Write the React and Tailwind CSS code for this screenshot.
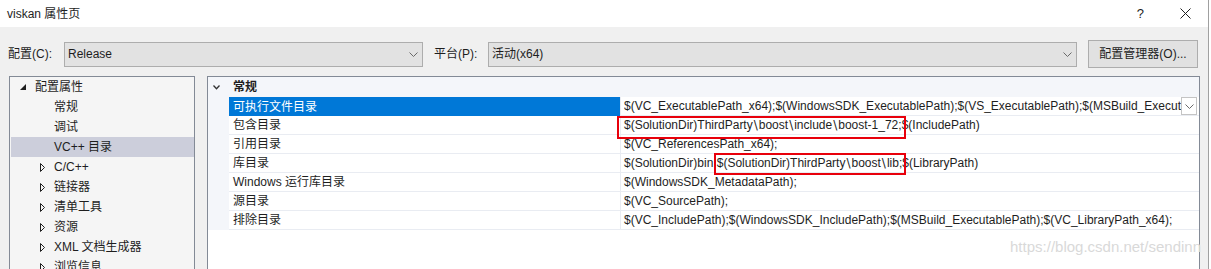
import React from 'react';

const tree = [
  { label: '配置属性', level: 0, icon: 'open' },
  { label: '常规', level: 1 },
  { label: '调试', level: 1 },
  { label: 'VC++ 目录', level: 1, selected: true },
  { label: 'C/C++', level: 1, icon: 'closed' },
  { label: '链接器', level: 1, icon: 'closed' },
  { label: '清单工具', level: 1, icon: 'closed' },
  { label: '资源', level: 1, icon: 'closed' },
  { label: 'XML 文档生成器', level: 1, icon: 'closed' },
  { label: '浏览信息', level: 1, icon: 'closed' },
];

function Chevron() {
  return (
    <svg width="9" height="5" viewBox="0 0 9 5" className="shrink-0">
      <polyline points="0.5,0.5 4.5,4.5 8.5,0.5" fill="none" stroke="#6a6a6a" strokeWidth="1" />
    </svg>
  );
}

// backslashes in the reference font are wider than Arial's
function P({ text }) {
  const parts = text.split('\\');
  return parts.map((part, i) => (
    <React.Fragment key={i}>
      {part}
      {i < parts.length - 1 && <span className="px-[1px] font-['DejaVu_Sans']">\</span>}
    </React.Fragment>
  ));
}

function RedBox({ className }) {
  return <span className={'absolute border-2 border-[#e8000b] pointer-events-none ' + className} />;
}

function TreeRow({ item }) {
  return (
    <div className={'h-[20px] shrink-0 flex items-center ' + (item.selected ? 'bg-[#cccedb] ml-[1px]' : '')}>
      {item.icon === 'open' && (
        <>
          <span className="w-[10px]" />
          <svg width="6" height="6" viewBox="0 0 6 6" className="shrink-0">
            <polygon points="6,0 6,6 0,6" fill="#1e1e1e" />
          </svg>
          <span className="ml-[9px]">{item.label}</span>
        </>
      )}
      {item.icon === 'closed' && (
        <>
          <span className="w-[30px]" />
          <svg width="5" height="9" viewBox="0 0 5 9" className="shrink-0">
            <polygon points="0.5,0.5 4.5,4.5 0.5,8.5" fill="none" stroke="#1e1e1e" strokeWidth="1" />
          </svg>
          <span className="ml-[9px]">{item.label}</span>
        </>
      )}
      {!item.icon && (
        <span className={item.selected ? 'pl-[43px]' : 'pl-[44px]'}>{item.label}</span>
      )}
    </div>
  );
}

function GridRow({ name, selected, children, dropdown }) {
  return (
    <div className="flex h-[19px] shrink-0">
      <div className="w-[21px] bg-[#f4f6fa]" />
      <div
        className={
          'w-[392px] h-full border-r border-[#e9ecf2] pl-[4px] flex items-center ' +
          (selected ? 'bg-[#0078d7] text-white' : 'border-b')
        }
      >
        {name}
      </div>
      <div className="flex-1 min-w-0 h-full border-b border-[#e9ecf2] pl-[3px] flex items-center">
        <div className={'flex-1 min-w-0 whitespace-nowrap leading-[18px] ' + (dropdown ? 'overflow-hidden' : '')}>
          {children}
        </div>
        {dropdown && (
          <div className="w-[16px] h-[18px] mr-[2px] border border-[#c4c4c4] bg-white flex items-center justify-center">
            <Chevron />
          </div>
        )}
      </div>
    </div>
  );
}

export default function App() {
  return (
    <div className="relative w-[1211px] h-[269px] overflow-hidden bg-white text-[12px] text-[#1e1e1e] font-['Liberation_Sans','Noto_Sans_CJK_SC',sans-serif]">
      <div className="w-[1209px] h-full border-r border-[#a0a0a0] flex flex-col">
        {/* title bar */}
        <div className="h-[27px] shrink-0 bg-white flex items-center justify-between pl-[7px] pr-[17px]">
          <span>viskan 属性页</span>
          <div className="flex items-center">
            <span className="text-[13px]">?</span>
            <svg width="11" height="11" viewBox="0 0 11 11" className="ml-[36px]">
              <path d="M0.5 0.5 L10.5 10.5 M10.5 0.5 L0.5 10.5" stroke="#1e1e1e" strokeWidth="1" />
            </svg>
          </div>
        </div>

        <div className="flex-1 min-h-0 bg-[#f0f0f0] flex flex-col">
          {/* toolbar */}
          <div className="mt-[13px] h-[28px] shrink-0 flex items-center pl-[8px]">
            <span className="w-[56px]">配置(C):</span>
            <div className="w-[359px] h-[25px] border border-[#adadad] bg-[#e2e2e2] flex items-center pl-[3px] pr-[4px]">
              <span className="flex-1">Release</span>
              <Chevron />
            </div>
            <span className="ml-[11px] w-[54px]">平台(P):</span>
            <div className="w-[589px] h-[25px] border border-[#adadad] bg-[#e2e2e2] flex items-center pl-[3px] pr-[4px]">
              <span className="flex-1">活动(x64)</span>
              <Chevron />
            </div>
            <div className="ml-[11px] w-[110px] h-[28px] border border-[#adadad] bg-[#e1e1e1] flex items-center justify-center">
              配置管理器(O)...
            </div>
          </div>

          {/* panels */}
          <div className="mt-[8px] flex-1 min-h-0 flex pl-[9px]">
            <div className="w-[186px] border border-b-0 border-[#838a96] bg-[#f5f5f5] flex flex-col overflow-hidden">
              {tree.map((item) => (
                <TreeRow key={item.label} item={item} />
              ))}
            </div>

            <div className="ml-[12px] w-[993px] border border-b-0 border-[#838a96] bg-white flex flex-col">
              <div className="h-[20px] shrink-0 flex items-center bg-[#f4f6fa]">
                <div className="w-[21px] pl-[5px] flex items-center">
                  <svg width="7" height="5" viewBox="0 0 7 5">
                    <polyline points="0.5,0.5 3.5,3.8 6.5,0.5" fill="none" stroke="#333" strokeWidth="1.3" />
                  </svg>
                </div>
                <span className="pl-[4px] font-bold">常规</span>
              </div>

              <GridRow name="可执行文件目录" selected dropdown>
                $(VC_ExecutablePath_x64);$(WindowsSDK_ExecutablePath);$(VS_ExecutablePath);$(MSBuild_ExecutablePath);$(FxCopDir);$(PATH);
              </GridRow>
              <GridRow name="包含目录">
                <span className="relative inline-block h-[18px]">
                  <P text="$(SolutionDir)ThirdParty\boost\include\boost-1_72;" />
                  <RedBox className="left-[-7px] right-[-4px] top-0 h-[23px]" />
                </span>
                $(IncludePath)
              </GridRow>
              <GridRow name="引用目录">$(VC_ReferencesPath_x64);</GridRow>
              <GridRow name="库目录">
                $(SolutionDir)bin;
                <span className="relative inline-block h-[18px]">
                  <P text="$(SolutionDir)ThirdParty\boost\lib;" />
                  <RedBox className="left-[-3px] right-[-4px] top-[-1px] h-[22px]" />
                </span>
                $(LibraryPath)
              </GridRow>
              <GridRow name="Windows 运行库目录">$(WindowsSDK_MetadataPath);</GridRow>
              <GridRow name="源目录">$(VC_SourcePath);</GridRow>
              <GridRow name="排除目录">
                $(VC_IncludePath);$(WindowsSDK_IncludePath);$(MSBuild_ExecutablePath);$(VC_LibraryPath_x64);
              </GridRow>
            </div>
          </div>
        </div>
      </div>

      <span className="absolute right-[10px] top-[236px] text-[15px] text-[#d9d9d9]">
        https://blog.csdn.net/sendinn
      </span>
    </div>
  );
}
